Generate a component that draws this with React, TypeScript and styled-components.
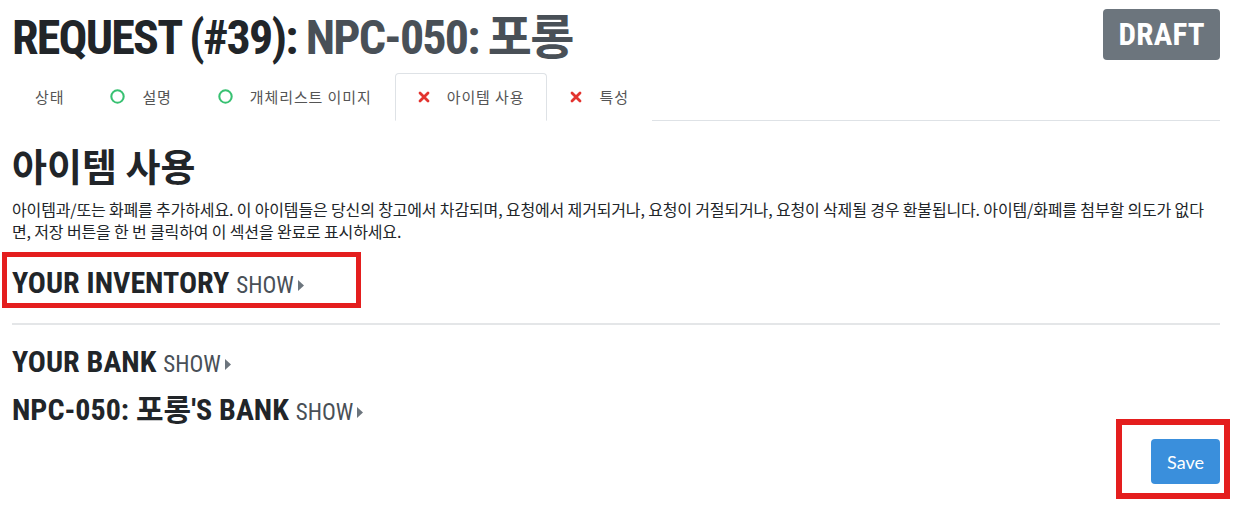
import { ReactNode } from 'react';
import styled, { createGlobalStyle } from 'styled-components';

const condensed = `"Roboto Condensed", "Liberation Sans Narrow", "DejaVu Sans Condensed", Roboto, "Noto Sans CJK KR", sans-serif`;
const korean = `"Noto Sans CJK KR", "Noto Sans", sans-serif`;

const GlobalStyle = createGlobalStyle`
  body {
    margin: 0;
    background: #fff;
    color: #212529;
    font-family: ${korean};
  }
`;

const Page = styled.div`
  padding: 0 13px 30px 12px;
`;

const Header = styled.header`
  display: flex;
  justify-content: space-between;
  align-items: flex-start;
  padding-top: 9px;
`;

const Title = styled.h1`
  margin: 0;
  font-family: ${condensed};
  font-stretch: condensed;
  font-size: 48px;
  line-height: 1.2;
  font-weight: 700;
  letter-spacing: -1.8px;
  color: #212529;
`;

const Muted = styled.span`
  color: #495057;
`;

const Badge = styled.span`
  display: inline-block;
  height: 51px;
  line-height: 51px;
  padding: 0 15px;
  border-radius: 4px;
  background: #6c757d;
  color: #fff;
  font-family: ${condensed};
  font-stretch: condensed;
  font-size: 31px;
  font-weight: 700;
  letter-spacing: 0.3px;
`;

const TabList = styled.ul`
  display: flex;
  list-style: none;
  margin: 6px 0 0;
  padding: 0;
  border-bottom: 1px solid #dee2e6;
`;

const Tab = styled.li<{ $active?: boolean }>`
  display: flex;
  align-items: center;
  gap: 17px;
  height: 46px;
  padding: 0 22px 0 22px;
  margin-bottom: -1px;
  border: 1px solid ${(p) => (p.$active ? '#dee2e6' : 'transparent')};
  border-bottom-color: ${(p) => (p.$active ? '#fff' : 'transparent')};
  border-radius: 4px 4px 0 0;
  background: #fff;
  color: #555;
  font-size: 15px;
  letter-spacing: 0.9px;
`;

const SectionTitle = styled.h2`
  margin: 21px 0 11px;
  font-size: 38px;
  line-height: 1.2;
  font-weight: 700;
  color: #212529;
`;

const Lead = styled.p`
  margin: 0 0 17px;
  font-size: 16px;
  line-height: 22px;
  letter-spacing: -0.15px;
  color: #212529;
`;

const Highlight = styled.div`
  position: relative;
  width: fit-content;

  &::after {
    content: '';
    position: absolute;
    inset: -7px -57px -1px -10px;
    border: 5px solid #e41e1e;
    pointer-events: none;
  }
`;

const Storage = styled.h3`
  margin: 0;
  font-family: ${condensed};
  font-stretch: condensed;
  font-size: 30px;
  line-height: 48px;
  height: 48px;
  font-weight: 700;
  color: #212529;
`;

const ShowLink = styled.span`
  display: inline-flex;
  align-items: center;
  gap: 4px;
  margin-left: 7px;
  font-size: 23px;
  line-height: 1;
  font-weight: 400;
  color: #495057;
`;

const Divider = styled.hr`
  margin: 16px 0 13px;
  border: 0;
  border-top: 2px solid #e4e6e8;
`;

const Footer = styled.div`
  display: flex;
  justify-content: flex-end;
  margin-top: 5px;
`;

const SaveFrame = styled.div`
  position: relative;

  &::after {
    content: '';
    position: absolute;
    inset: -20px -10px -15px -35px;
    border: 6px solid #e41e1e;
    pointer-events: none;
  }
`;

const SaveButton = styled.button`
  height: 45px;
  padding: 0 16px;
  border: 0;
  border-radius: 4px;
  background: #3a8fdc;
  color: #fff;
  font-family: Lato, ${korean};
  font-size: 18px;
`;

const Circle = () => (
  <svg width="15" height="15" viewBox="0 0 16 16">
    <circle cx="8" cy="8" r="6.6" fill="none" stroke="#38c172" strokeWidth="2.2" />
  </svg>
);

const Cross = () => (
  <svg width="12" height="12" viewBox="0 0 12 12">
    <path d="M2 2 L10 10 M10 2 L2 10" stroke="#e3342f" strokeWidth="2.8" strokeLinecap="round" />
  </svg>
);

const Caret = () => (
  <svg width="6" height="11" viewBox="0 0 6 11">
    <path d="M0 0 L6 5.5 L0 11 Z" fill="#6c757d" />
  </svg>
);

type TabItem = { label: string; state?: 'ok' | 'error'; active?: boolean };

const tabs: TabItem[] = [
  { label: '상태' },
  { label: '설명', state: 'ok' },
  { label: '개체리스트 이미지', state: 'ok' },
  { label: '아이템 사용', state: 'error', active: true },
  { label: '특성', state: 'error' },
];

function StorageRow({ children }: { children: ReactNode }) {
  return (
    <Storage>
      {children}
      <ShowLink>
        SHOW
        <Caret />
      </ShowLink>
    </Storage>
  );
}

export default function App() {
  return (
    <Page>
      <GlobalStyle />
      <Header>
        <Title>
          REQUEST (#39): <Muted>NPC-050: 포롱</Muted>
        </Title>
        <Badge>DRAFT</Badge>
      </Header>

      <TabList>
        {tabs.map((t) => (
          <Tab key={t.label} $active={t.active}>
            {t.state === 'ok' && <Circle />}
            {t.state === 'error' && <Cross />}
            {t.label}
          </Tab>
        ))}
      </TabList>

      <SectionTitle>아이템 사용</SectionTitle>
      <Lead>
        아이템과/또는 화폐를 추가하세요. 이 아이템들은 당신의 창고에서 차감되며, 요청에서 제거되거나,
        요청이 거절되거나, 요청이 삭제될 경우 환불됩니다. 아이템/화폐를 첨부할 의도가 없다면, 저장
        버튼을 한 번 클릭하여 이 섹션을 완료로 표시하세요.
      </Lead>

      <Highlight>
        <StorageRow>YOUR INVENTORY</StorageRow>
      </Highlight>
      <Divider />
      <StorageRow>YOUR BANK</StorageRow>
      <StorageRow>NPC-050: 포롱'S BANK</StorageRow>

      <Footer>
        <SaveFrame>
          <SaveButton type="button">Save</SaveButton>
        </SaveFrame>
      </Footer>
    </Page>
  );
}
